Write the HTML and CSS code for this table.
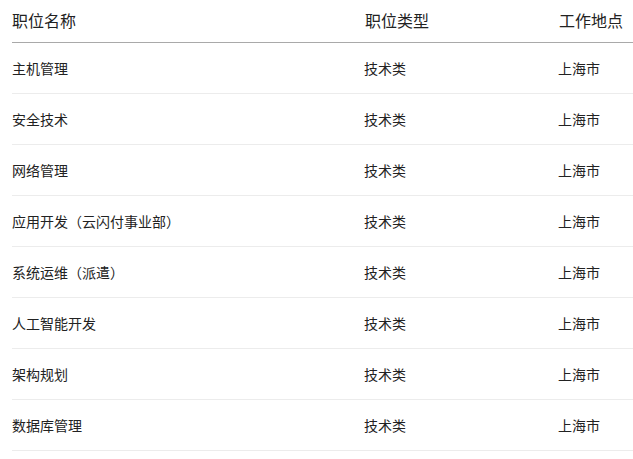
FILE: index.html
```html
<!DOCTYPE html>
<html lang="zh-CN">
<head>
<meta charset="utf-8">
<title>职位列表</title>
<link rel="stylesheet" href="styles.css">
</head>
<body>
<table class="jobs">
  <thead>
    <tr><th class="c1">职位名称</th><th class="c2">职位类型</th><th class="c3">工作地点</th></tr>
  </thead>
  <tbody>
    <tr><td>主机管理</td><td>技术类</td><td>上海市</td></tr>
    <tr><td>安全技术</td><td>技术类</td><td>上海市</td></tr>
    <tr><td>网络管理</td><td>技术类</td><td>上海市</td></tr>
    <tr><td>应用开发（云闪付事业部）</td><td>技术类</td><td>上海市</td></tr>
    <tr><td>系统运维（派遣）</td><td>技术类</td><td>上海市</td></tr>
    <tr><td>人工智能开发</td><td>技术类</td><td>上海市</td></tr>
    <tr><td>架构规划</td><td>技术类</td><td>上海市</td></tr>
    <tr><td>数据库管理</td><td>技术类</td><td>上海市</td></tr>
  </tbody>
</table>
</body>
</html>
```
FILE: styles.css
```css
html, body {
  margin: 0;
  padding: 0;
  background: #fff;
}
body {
  font-family: "Noto Sans CJK SC", "Noto Sans", sans-serif;
  color: #222;
  overflow: hidden;
}
.jobs {
  margin-left: 12px;
  width: 621px;
  border-collapse: collapse;
  table-layout: fixed;
}
.jobs th, .jobs td {
  padding: 0;
  text-align: left;
  white-space: nowrap;
}
.jobs th {
  font-weight: normal;
  font-size: 16px;
  height: 42px;
  line-height: 41px;
  vertical-align: top;
  border-bottom: 1px solid #a9a9a9;
}
.jobs .c1 { width: 352px; }
.jobs .c2 { width: 193px; padding-left: 1px; }
.jobs .c3 { padding-left: 1px; }
.jobs td {
  font-size: 14px;
  height: 50px;
  line-height: 49px;
  border-bottom: 1px solid #ececec;
}
```
